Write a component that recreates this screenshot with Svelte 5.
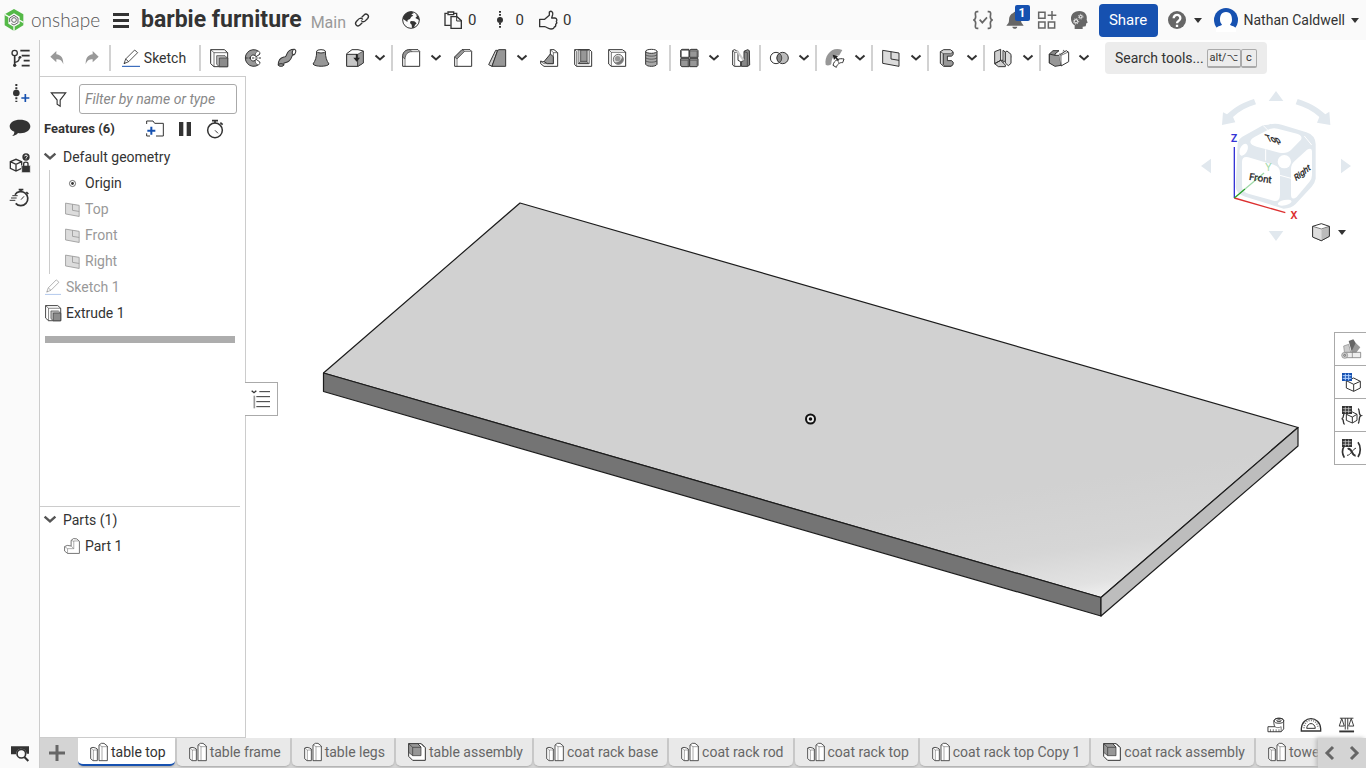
<script>
  // Icon artwork on a 54-unit grid, three units to the pixel at the default size.
  const G = '#979797';
  const L = '#cfcfcf';
  const part = '<path fill="#fff" stroke-width="2.5" d="M2 15l7-2 8 2 5 3v35H9l-7-6zM27 6l7-5h8l10 8v44H27z"/><path stroke="#555" stroke-width="1.5" d="M3 15l7 6h11M10 21v31M28 6l8 5h15M36 11v41"/>';
  const assembly = '<path fill="#fff" d="M2 2h38l12 12v38H14L2 40z"/><path fill="#979797" stroke-width="2" d="M2 2h27l10 10v26H14L2 28z"/><path stroke-width="2" d="M2 2l12 11h25M14 13v25M29 2l10 10M40 3l10 10"/>';
  const plane = '<path fill="#dcdcdc" d="M2 4l49 8v40L2 43z"/><path d="M27 8v22l24 4"/>';
  const pencil = '<path stroke-width="2.5" fill="#fff" d="M6 44l5-14L38 3l9 8-27 27zM11 30l9 8M6 44l4-3"/>';
  const extrude = `<path fill="#fff" d="M2 2h41l10 9v42H12L2 44z"/><path stroke-width="2" d="M2 2l10 9h41M12 11v42"/><path fill="#bdbdbd" stroke-width="2" d="M20 20h25l8 8v25H28l-8-7z"/><path fill="#8c8c8c" stroke-width="2" d="M28 27h25v26H28z"/>`;
  const gridDark = '<path fill="#333" stroke="none" d="M0 0h30v24H0z"/><path stroke="#ddd" stroke-width="2" d="M2 8h26M2 16h26M10 2v20M20 2v20"/>';

  const icons = {
    extrude,
    revolve: `<path fill="${G}" d="M44 7A25 25 0 1 0 44 47L48 40 36 31A9 9 0 1 1 36 23L48 15z"/><path fill="#fff" stroke-width="2" d="M34 21c-2-9 4-15 10-14 6 2 5 9-7 15zM34 33c-2 9 4 15 10 14 6-2 5-9-7-15z"/><path stroke-dasharray="7 3" d="M4 27h50"/>`,
    sweep: `<path stroke-width="20" d="M9 49C9 28 20 36 28 29 38 21 30 9 49 9"/><path stroke="${G}" stroke-width="14" d="M9 48C9 28 20 36 28 29 38 21 30 9 48 9"/><ellipse cx="9" cy="48" rx="8" ry="4" fill="${G}"/><ellipse cx="48" cy="9" rx="5" ry="8" fill="#fff" transform="rotate(15 48 9)"/>`,
    loft: `<path fill="${G}" d="M14 7C14 24 10 36 3 45c5 9 44 9 48 0-7-9-11-21-11-38z"/><ellipse cx="27" cy="7" rx="13" ry="5" fill="#fff"/>`,
    thicken: `<path fill="#fff" d="M2 14L18 2h18l16 4v36L36 52 2 50z"/><path fill="#c7c7c7" d="M2 16h33v36H2z"/><path fill="#999" stroke-width="2" d="M35 16L52 6v36L35 52z"/><path stroke-width="5" stroke="#222" d="M32 15v14"/><path fill="#222" stroke="none" d="M22 26h20L32 38z"/>`,
    fillet: `<path fill="#fff" d="M2 52V24C2 10 10 2 24 2h24l5 5v45z"/><path fill="${G}" stroke-width="2" d="M2 24C2 10 10 2 24 2l6 6C17 8 10 16 9 30z"/><path stroke-width="2" d="M30 8h22M9 30v22"/>`,
    chamfer: `<path fill="#fff" d="M2 52V24L24 2h24l5 5v45z"/><path fill="${G}" stroke-width="2" d="M2 24L24 2l8 5L9 30z"/><path stroke-width="2" d="M32 7h20M9 30v22"/>`,
    draft: `<path fill="#d0d0d0" d="M2 47L23 4h6L12 52z"/><path fill="${G}" d="M12 52L29 4l4-2h20v50z"/>`,
    rib: `<path fill="#fff" d="M2 36l6 2h23V2h11l11 9v41H12L2 44z"/><path stroke-width="2" d="M31 2l9 9h12M2 37l10 7h28V11"/><path fill="${G}" d="M12 38L31 15l9 8v21H22z"/>`,
    shell: `<path fill="#fff" d="M2 2h45l6 6v44H8l-6-5z"/><path fill="${G}" d="M13 3h32v41H13z"/><path fill="#c9c9c9" stroke-width="2" d="M13 3h7v34l-7 7M45 3l-6 1v34l6 6M20 37h19"/><path stroke-width="2" d="M2 2l6 6v44"/>`,
    hole: `<path fill="#fff" d="M2 2h41l10 7v43H10L2 45z"/><path stroke-width="2" d="M2 2l8 8h42M10 10v42"/><circle cx="31" cy="31" r="15" fill="#ddd" stroke-width="2"/><path fill="#777" stroke="none" d="M43 22A15 15 0 1 1 19 40c12 2 22-5 24-18z"/><circle cx="29" cy="29" r="8" fill="${G}" stroke="none"/>`,
    thread: `<path fill="#aaa" d="M11 7v39c4 8 30 8 34 0V7"/><path stroke-width="2" d="M11 17c4 6 30 6 34 0M11 26c4 6 30 6 34 0M11 35c4 6 30 6 34 0"/><ellipse cx="28" cy="7" rx="17" ry="6" fill="#fff"/>`,
    pattern: `<path fill="${G}" d="M2 4l4-3h21v24H2zM29 4l4-3h18l3 4v20H29zM2 29h25v24H6l-4-3zM29 29h25v20l-3 4H29z"/><path fill="#fff" stroke="none" d="M6 6h19v17H6z"/><path stroke="#555" stroke-width="2" d="M29 6h22v19M2 34h22v19M29 34h22v16"/>`,
    mirror: `<path fill="#fff" d="M2 5l5-3 11 5v27l8 4v14H7l-5-4z"/><path stroke-width="2" d="M2 5l6 5h9M8 10v41"/><path fill="#888" d="M52 5l-5-3-11 5v27l-8 4v14h19l6-4z"/><path stroke="#ccc" stroke-width="6" d="M14 4l21 30"/><path stroke-width="2" d="M36 8l10 3V52"/>`,
    boolean: `<circle cx="18" cy="27" r="17" fill="#fff"/><circle cx="38" cy="27" r="17" fill="#bbb"/><path fill="#888" stroke-width="2.5" d="M28 13a17 17 0 0 1 0 28 17 17 0 0 1 0-28z"/>`,
    modify: `<path fill="${G}" stroke="none" d="M-1 47C-6 18 19-10 49 3L39 20C28 14 17 24 16 44 14 49 4 51-1 47z"/><path fill="#fff" d="M21 49c2-9 6-14 13-17 7-4 14-3 20-2l-4 11c-6-1-9 1-13 4s-5 7-6 10z"/><path stroke-width="2" d="M34 32l5 11"/><path fill="#222" stroke="none" d="M20 17l17 4-5 4 7 8-3 3-8-8-4 5z"/>`,
    plane,
    frame: `<path fill="#d6d6d6" d="M7 8L17 2h20l8 6v9l-5 4H28v14h12l5 4v8l-6 5H17L7 43z"/><path fill="#999" stroke-width="2" d="M16 14h22l7-5v8l-5 4H28v14h12l5 4v7l-6 5H20l-4-4z"/><path stroke-width="2" d="M7 8l9 6v33"/>`,
    sheet: `<path fill="${L}" d="M2 8l18-7v33L2 44zM20 34l14 14v5H13L2 44zM20 34h18l14-10"/><path fill="#eee" d="M27 4l7 5v26l-7 5z"/><path fill="#ddd" d="M34 9l5-3 12 10v27l-8 7-9-8z"/>`,
    surface: `<path fill="#888" d="M-2 15L9 5h18L15 15v32l-17-5z"/><path fill="${G}" d="M-2 15l17 4h18v30l-18 3-17-10z"/><path fill="#fff" d="M29 17l20-12 7 5v28L33 51z"/><path fill="#ddd" stroke-width="2" d="M27 14l6 5v32M39 3l5 4-11 9"/><path stroke-width="2" d="M33 19L55 9"/>`,
    undo: '<path fill="#999" stroke="none" d="M7 23L25 6v10c14 2 21 10 21 30-4-11-10-15-21-15v9z"/>',
    redo: '<path fill="#999" stroke="none" d="M50 23L32 6v10C18 18 11 26 11 46c4-11 10-15 21-15v9z"/>',
    sketch: pencil + '<path stroke="#1651b0" d="M0 52h54"/>',
    sketchOff: `${pencil}<path stroke="#a9c2ea" d="M0 52h54"/>`,
    part,
    assembly,
    tree: '<g stroke-width="5"><circle cx="11" cy="12" r="8" stroke-width="4"/><path d="M11 20v28M28 5h28M32 20h24M38 35h18M32 50h24" /><circle cx="11" cy="49" r="5" fill="#333" stroke="none"/><path stroke-width="4" d="M11 40c10 0 14-4 14-15"/><circle cx="27" cy="25" r="4" fill="#333" stroke="none"/></g>',
    version: '<path stroke-width="6" stroke-dasharray="6 4" d="M16 0v54"/><circle cx="16" cy="27" r="10" fill="#333" stroke="none"/><path stroke="#1651b0" stroke-width="5" d="M43 30v24M31 42h24"/>',
    comment: '<path fill="#333" stroke="none" d="M27 2c18 0 31 8 31 20S45 43 29 43c-3 0-6 0-8-1-4 5-10 9-18 9 5-3 7-8 7-13C1 35-4 29-4 22-4 10 10 2 27 2z"/>',
    secure: '<path stroke-width="4" d="M-2 23l17-7 17 7v20l-17 8-17-8zM-2 23l17 8 17-8M15 31v20"/><circle cx="45" cy="9" r="11" fill="#333" stroke="none"/><path stroke="#fff" stroke-width="3" d="M41 7c0-5 8-5 8 0 0 3-4 3-4 6M45 14v2"/><path fill="#333" stroke="#fafafa" stroke-width="2" d="M32 34h26v22H32z"/><path stroke-width="4" d="M38 36v-7c0-6 13-6 13 0v7"/>',
    stopwatchFast: '<path stroke-width="5" d="M12 17a21 21 0 1 1 2 26M23 2h14M30 2v7M46 9l6 6"/><path stroke-width="3" d="M4 20h16M0 27h17M-4 34h17M30 32l9-10"/>',
    screenSearch: '<path fill="#333" stroke="none" d="M0 7h54v22H47c-2-20-31-20-32 2H0z"/><circle cx="31" cy="29" r="13" stroke-width="5"/><path stroke-width="6" d="M40 39l12 12"/>',
    link: '<g stroke-width="4.5" stroke-linecap="round"><path d="M29 24c-7-7-14 0-17 4L8 32c-8 9 4 20 12 12l7-7"/><path d="M25 30c7 7 14 0 17-4l4-4c8-9-4-20-12-12l-7 7"/></g>',
    globe: '<circle cx="27" cy="27" r="25"/><path fill="#333" stroke="none" d="M7 12C14 4 22 1 31 2l4 5-7 3 6 4-6 3-4 7-7 3-1 6-7-5-6-4C3 19 4 16 7 12zM26 30l11 1 7 6-5 5-3 8-6 1-1-10-5-5zM41 9l8 7 4 12-6-3-7-4 5-5z"/>',
    copy: '<path stroke-width="4" d="M20 43H3V7h8M29 7h9v8"/><path stroke-width="4" fill="#fafafa" d="M12 3h17v8H12zM21 17h18l13 12v23H21z"/><path stroke-width="3" d="M38 17v13h14"/>',
    dots: '<path stroke-width="6" stroke-dasharray="5 4" d="M27 0v54"/><circle cx="27" cy="27" r="9" fill="#333" stroke="none"/>',
    thumb: '<path stroke-width="4" stroke-linejoin="round" d="M2 25h15L31 13V3c6-5 12 0 10 8l-3 10h10c7 1 6 8 4 10 2 3 1 7-2 9 1 4-1 7-4 8-1 6-6 6-10 6-9 0-12-6-19-7H2z"/>',
    braces: '<g stroke="#666" stroke-width="5"><path d="M13 2H9C1 2 5 12 5 17c0 6-2 9-7 10 5 1 7 4 7 10 0 5-4 15 4 15h4M41 2h4c8 0 4 10 4 15 0 6 2 9 7 10-5 1-7 4-7 10 0 5 4 15-4 15h-4M17 26l8 9 14-16"/></g>',
    bell: '<path fill="#666" stroke="none" d="M22 6c2-5 8-5 9 0 10 3 14 12 14 22 0 8 4 10 8 16H1c5-6 8-8 8-16C9 17 13 9 22 6zM19 47h15c-1 8-14 8-15 0z"/>',
    apps: '<path stroke="#666" stroke-width="4.5" d="M2 4h19v18H2zM2 33h19v18H2zM31 33h19v18H31zM42 0v26M29 13h26"/>',
    head: '<path fill="#666" stroke="none" d="M3 25C2 8 14 0 28 0c17 0 25 13 22 26l3 9-4 2-2 9-9 1v7H14V43C7 39 4 33 3 25z"/><g stroke="#fff"><circle cx="18" cy="31" r="5" stroke-width="3"/><circle cx="18" cy="31" r="8" stroke-width="2.5" stroke-dasharray="3 3"/><circle cx="32" cy="17" r="4" stroke-width="3"/><circle cx="32" cy="17" r="7" stroke-width="2" stroke-dasharray="3 2.5"/></g>',
    help: '<circle cx="27" cy="27" r="27" fill="#666" stroke="none"/><path stroke="#fff" stroke-width="7" d="M17 22c0-14 21-13 20 0 0 8-10 7-10 15M27 41v7"/>',
    filter: '<path stroke-width="4" d="M1 3h52L33 29v22l-11-7V29z"/>',
    folder: '<path d="M2 12V3h19l5 7h26v38H30M2 40v8h10"/><path stroke="#1651b0" stroke-width="6" d="M16 20v24M4 32h24"/>',
    pause: '<path fill="#333" stroke="none" d="M9 6h13v42H9zM32 6h13v42H32z"/>',
    timer: '<circle cx="27" cy="31" r="22" stroke-width="4.5"/><path stroke-width="5" d="M18 2h18M27 2v8M43 8l7 6"/><path d="M27 31l9 9"/>',
    origin: '<circle cx="27" cy="27" r="11" stroke-width="2.5"/><circle cx="27" cy="27" r="5" fill="#333" stroke="none"/>',
    body: '<path stroke="#666" stroke-width="3" fill="#fff" d="M2 29l9-4 13 2V8l8-6 11 1 9 8v41H12L2 44z"/><path stroke="#777" stroke-width="2" d="M2 29l10 7v16M12 36h21V10h18M24 27l9 9M24 8l9 3"/>',
    list: '<path d="M-1 2l7 6 7-6" stroke-width="4"/><path stroke="#999" stroke-width="5" d="M7 17v38"/><path d="M22 5h32M13 20h41M13 35h41M13 50h41"/>',
    appearance: '<path fill="#666" stroke="none" d="M20 3l14-5 9 14-13 26z"/><path fill="#999" stroke="none" d="M41 9l14 13-13 17-16 1z"/><path fill="#ccc" stroke="#888" stroke-width="2" d="M5 18l15-5 9 34-20 4z"/><path fill="#eee" stroke="#666" stroke-width="2" d="M10 37h46v16H10z"/><circle cx="8" cy="46" r="9" fill="#ccc" stroke="#888" stroke-width="2"/><circle cx="8" cy="46" r="3" stroke="#555" stroke-width="2"/><path stroke="#777" stroke-width="2" d="M31 37v16"/>',
    tableCube: '<path fill="#fff" d="M13 23l22-8 20 10v20L35 55 13 45zM13 23l22 11 20-9M35 34v21"/><path fill="#1651b0" stroke="none" d="M0 0h30v24H0z"/><path stroke="#b5d4ff" stroke-width="3" d="M2 8h26M2 16h26M10 2v20M20 2v20"/>',
    tableBraces: '<path fill="#fff" d="M13 25l18-7 14 7v18l-14 8-18-8zM13 25l18 8 14-8M31 33v18"/><path d="M7 24c-6 2 1 12-8 14 9 2 2 16 9 17M48 8c7 2 0 18 9 21-9 3-2 20-9 23" stroke-width="4"/>' + gridDark,
    tableVar: '<path stroke-width="5" d="M6 22c-6 10-6 22 1 34M48 10c9 12 9 30 0 44"/><path stroke-width="6" d="M17 30c13-6 11 20 24 20"/><path stroke-width="3" d="M42 28c-7-2-16 22-27 21"/>' + gridDark,
    tape: '<path fill="#fff" d="M3 34h22c-3-6-4-12-3-20 5-9 27-9 31 0v27l-8 9H3z"/><ellipse cx="38" cy="15" rx="15" ry="8"/><ellipse cx="38" cy="15" rx="7" ry="3"/><path d="M25 34c5 4 14 4 20 0v16M11 42v8M20 42v8M29 42v8M38 42v8" stroke-width="2"/>',
    protractor: '<path fill="#fff" d="M-2 48v-7C0 1 54 1 56 41v7z" stroke-width="4"/><path d="M14 40c2-19 24-19 26 0z"/><path stroke-width="5" stroke="#777" stroke-dasharray="3 4" d="M6 40C7 8 47 8 48 40"/>',
    scale: '<path stroke-width="3" d="M6 7h43M23 7v36M31 7v36M12 8L4 32h16zM42 8l-8 24h16z"/><path stroke-width="6" d="M4 49h47"/>',
    cube: '<path fill="#fff" d="M2 10l26-8 24 8v30L28 53 2 42z"/><path fill="#ddd" stroke="none" d="M3 11l25 9v32L3 41z"/><path fill="#bbb" stroke="none" d="M28 20l23-9v28L28 52z"/><path stroke-width="2" d="M2 10l26 8 24-8v30L28 53 2 42z"/>'
  };

  const toolGroups = [
    ['extrude', 'revolve', 'sweep', 'loft', 'thicken', '>'],
    ['fillet', '>', 'chamfer', 'draft', '>', 'rib', 'shell', 'hole', 'thread'],
    ['pattern', '>', 'mirror'],
    ['boolean', '>'],
    ['modify', '>'],
    ['plane', '>'],
    ['frame', '>'],
    ['sheet', '>'],
    ['surface', '>']
  ];

  const rail = ['tree', 'version', 'comment', 'secure', 'stopwatchFast'];
  const geometry = [
    { name: 'Origin', icon: 'origin' },
    { name: 'Top', icon: 'plane', dim: true },
    { name: 'Front', icon: 'plane', dim: true },
    { name: 'Right', icon: 'plane', dim: true }
  ];
  const tabs = [
    ['table top', 'part'], ['table frame', 'part'], ['table legs', 'part'], ['table assembly', 'assembly'],
    ['coat rack base', 'part'], ['coat rack rod', 'part'], ['coat rack top', 'part'],
    ['coat rack top Copy 1', 'part'], ['coat rack assembly', 'assembly'], ['towe', 'part']
  ];
  let active = $state(0);
  let filter = $state('');
</script>

{#snippet icon(name, size = 18)}
  <svg class="icon" width={size} height={size} viewBox="0 0 54 54" aria-hidden="true">{@html icons[name]}</svg>
{/snippet}

{#snippet chevron(w = 10)}
  <svg class="icon" width={w} height={w * 0.6} viewBox="0 0 10 6" aria-hidden="true"><path stroke-width="2" d="M.5.5L5 4.5 9.5.5" /></svg>
{/snippet}

{#snippet caret()}
  <svg width="8" height="5" viewBox="0 0 8 5" aria-hidden="true"><path fill="#333" d="M0 0h8L4 5z" /></svg>
{/snippet}

<div class="app">
  <header>
    <a class="brand" href="#home">
      <svg width="20" height="22" viewBox="0 0 60 66" aria-hidden="true">
        <path fill="#55b948" fill-rule="evenodd" d="M30 0l28 16v33L30 66 2 49V16zM30 13L13 23v21l17 10 17-10V23z" />
        <path fill="none" stroke="#fafafa" stroke-width="4" d="M2 16l14 8M58 40L45 33M30 66V53" />
        <path fill="none" stroke="#666" stroke-width="3" d="M17 39V27l13-8 12 8v14l-12 7-8-4" />
        <circle cx="30" cy="33" r="7" fill="none" stroke="#666" stroke-width="3" />
      </svg>
      <span>onshape</span>
    </a>
    <button class="menu" aria-label="Menu"><i></i><i></i><i></i></button>
    <h1>barbie furniture</h1>
    <span class="branch">Main</span>
    <button aria-label="Copy link">{@render icon('link', 16)}</button>
    <button class="globe" aria-label="Public document">{@render icon('globe')}</button>
    <button class="count">{@render icon('copy')}<span>0</span></button>
    <button class="count">{@render icon('dots')}<span>0</span></button>
    <button class="count">{@render icon('thumb')}<span>0</span></button>
    <div class="account">
      <button aria-label="Custom features">{@render icon('braces')}</button>
      <button class="bell" aria-label="Notifications">{@render icon('bell')}<b>1</b></button>
      <button aria-label="App store">{@render icon('apps')}</button>
      <button aria-label="Learning center">{@render icon('head')}</button>
      <button class="share">Share</button>
      <button class="help" aria-label="Help">{@render icon('help')}{@render caret()}</button>
      <button class="user">
        <svg width="24" height="24" viewBox="0 0 24 24" aria-hidden="true">
          <circle cx="12" cy="12" r="12" fill="#1651b0" />
          <path fill="#fff" d="M12 4c5 0 6 4 6 8 0 3-2 4-2 5 2 1 5 1 6 4v3H2v-3c1-3 4-3 6-4 0-1-2-2-2-5 0-4 1-8 6-8z" />
        </svg>
        <span>Nathan Caldwell</span>{@render caret()}
      </button>
    </div>
  </header>

  <div class="body">
    <nav class="rail">
      {#each rail as name}
        <button aria-label={name}>{@render icon(name)}</button>
      {/each}
      <button class="last" aria-label="Search tabs">{@render icon('screenSearch')}</button>
    </nav>

    <div class="work">
      <div class="toolbar">
        <button class="tool" aria-label="Undo">{@render icon('undo')}</button>
        <button class="tool" aria-label="Redo">{@render icon('redo')}</button>
        <i class="sep"></i>
        <button class="sketch">{@render icon('sketch')}Sketch</button>
        {#each toolGroups as group}
          <i class="sep"></i>
          {#each group as t}
            {#if t === '>'}
              <button class="drop" aria-label="More">{@render chevron()}</button>
            {:else}
              <button class="tool" aria-label={t}>{@render icon(t)}</button>
            {/if}
          {/each}
        {/each}
        <button class="search">Search tools... <kbd>alt/<span>⌥</span></kbd><kbd>c</kbd></button>
      </div>

      <div class="main">
        <aside>
          <div class="features">
            <div class="filter">
              {@render icon('filter', 15)}
              <input type="text" placeholder="Filter by name or type" aria-label="Filter features" bind:value={filter} />
            </div>
            <div class="heading">
              <h2>Features (6)</h2>
              <button aria-label="New folder">{@render icon('folder')}</button>
              <button aria-label="Pause">{@render icon('pause')}</button>
              <button aria-label="Timing">{@render icon('timer')}</button>
            </div>
            <button class="row toggle">{@render chevron(12)}<span>Default geometry</span></button>
            <ul class="nested">
              {#each geometry as g}
                <li class="row" class:dim={g.dim}>{@render icon(g.icon, 15)}<span>{g.name}</span></li>
              {/each}
            </ul>
            <div class="row dim">{@render icon('sketchOff', 16)}<span>Sketch 1</span></div>
            <div class="row">{@render icon('extrude', 16)}<span>Extrude 1</span></div>
            <div class="rollback"></div>
          </div>
          <div class="parts">
            <button class="row toggle">{@render chevron(12)}<span>Parts (1)</span></button>
            <div class="row part">{@render icon('body', 16)}<span>Part 1</span></div>
          </div>
        </aside>

        <main>
          <svg class="model" viewBox="246 76 1120 662" role="img" aria-label="Part 1">
            <defs>
              <linearGradient id="sheen" gradientUnits="userSpaceOnUse" x1="1080" y1="480" x2="1098" y2="600">
                <stop offset="0" stop-color="#d1d1d1" />
                <stop offset=".55" stop-color="#d6d6d6" />
                <stop offset=".85" stop-color="#e2e2e2" />
                <stop offset="1" stop-color="#f2f2f2" />
              </linearGradient>
            </defs>
            <g stroke="#1c1c1c" stroke-width="1.2" stroke-linejoin="round">
              <path fill="url(#sheen)" d="M520 203L1298 427.500 1101 597.500 323.500 373z" />
              <path fill="#747474" d="M323.500 373L1101 597.500V616L323.500 391.500z" />
              <path fill="#bdbdbd" d="M1298 427.500V446L1101 616V597.500z" />
            </g>
            <circle cx="810.500" cy="419" r="4.500" fill="#eee" stroke="#111" stroke-width="2" />
            <circle cx="810.500" cy="419" r="1.800" fill="#111" />
          </svg>

          <button class="handle" aria-label="Toggle panel">{@render icon('list')}</button>

          <div class="view">
            <svg width="176" height="170" viewBox="0 0 528 510" aria-label="View cube">
              <g fill="#e1e8ee">
                <path d="M258 33l22 30h-44zM258 483l22-30h-44zM33 258l30-22v44zM483 258l-30-22v44z" />
                <path d="M192 57l6 16c-27 8-49 20-69 38l7 16-40 8 3-38 12 6c24-22 50-37 81-46zM323 57l-6 16c27 8 51 20 71 38l-7 17 40 7-3-40-12 8c-24-22-52-37-83-46z" />
                <path d="M143 190q2-12 14-20l62-34 16-2q20-6 40 0l74 23q27 9 28 35v104q-2 12-12 24l-48 52q-14 14-36 14l-115-36q-28-9-29-30z" />
              </g>
              <g fill="#fff">
                <path d="M181 186q0-9 14-16l38-20q12-7 30-4l58 15q18 5 12 18l-30 31q-12 12-35 8l-68-18q-18-5-19-14z" />
                <path d="M156 246q0-18 19-14l76 22q19 6 19 24v66q-1 23-20 18l-75-21q-19-6-19-23z" />
                <path d="M303 268q0-16 11-25l37-34q16-8 15 8v68q0 12-8 21l-38 45q-16 12-17-6z" />
                <circle cx="283" cy="245" r="20" /><ellipse cx="161" cy="209" rx="11" ry="19" transform="rotate(25 161 209)" />
                <ellipse cx="284" cy="368" rx="21" ry="8" transform="rotate(-12 284 368)" />
              </g>
              <path fill="none" stroke="#fff" stroke-width="3" d="M227 208v34M270 286l33 9M343 168l22 27M219 136l14 14" />
              <g fill="none" stroke-width="4">
                <path stroke="#3535d6" d="M133 201v153" />
                <path stroke="#dc3030" d="M133 354l153 44" />
                <path stroke="#28a028" d="M133 354l32-27" />
                <path stroke="#9fd9a8" d="M165 327l57-48" />
              </g>
              <g class="axis">
                <text x="122" y="186" fill="#3535d6">Z</text>
                <text x="301" y="417" fill="#dc3030">X</text>
                <text x="225" y="274" fill="#9fd9a8" class="thin">Y</text>
              </g>
              <g class="face">
                <text class="front" transform="translate(176 299) rotate(9)">Front</text>
                <text transform="translate(317 304) rotate(-38) skewX(-18)">Right</text>
                <text transform="translate(233 183) rotate(10) skewX(38)">Top</text>
              </g>
            </svg>
            <button class="shade" aria-label="Display mode">{@render icon('cube')}{@render caret()}</button>
          </div>

          <div class="panels">
            <button aria-label="Appearances">{@render icon('appearance')}</button>
            <button aria-label="Configurations">{@render icon('tableCube')}</button>
            <button aria-label="Custom tables">{@render icon('tableBraces')}</button>
            <button aria-label="Variables">{@render icon('tableVar')}</button>
          </div>

          <div class="measure">
            <button aria-label="Measure">{@render icon('tape', 17)}</button>
            <button aria-label="Angle">{@render icon('protractor')}</button>
            <button aria-label="Mass properties">{@render icon('scale', 17)}</button>
          </div>
        </main>
      </div>

      <footer>
        <button class="add" aria-label="New tab"><svg width="16" height="16" viewBox="0 0 16 16"><path stroke="#666" stroke-width="3" d="M8 0v16M0 8h16" /></svg></button>
        <div class="tabs">
          {#each tabs as [name, kind], i}
            <button class="tab" class:active={i === active} onclick={() => (active = i)}>{@render icon(kind)}{name}</button>
          {/each}
        </div>
        <div class="scroll">
          <button aria-label="Previous tabs"><svg width="10" height="14" viewBox="0 0 10 14"><path fill="none" stroke="#666" stroke-width="3" d="M8 1L2 7l6 6" /></svg></button>
          <button aria-label="Next tabs"><svg width="10" height="14" viewBox="0 0 10 14"><path fill="none" stroke="#666" stroke-width="3" d="M2 1l6 6-6 6" /></svg></button>
        </div>
      </footer>
    </div>
  </div>
</div>

<style>
  :global(body) { margin: 0; }
  .app {
    display: flex; flex-direction: column; height: 100vh; overflow: hidden;
    background: #fff; color: #333; font: 14px/20px Roboto, "Liberation Sans", sans-serif;
  }
  button {
    display: flex; align-items: center; justify-content: center; flex: none;
    margin: 0; padding: 0; border: 0; background: none; color: inherit; font: inherit; cursor: pointer;
  }
  svg { display: block; flex: none; overflow: visible; }
  .icon { fill: none; stroke: #333; stroke-width: 3; }
  h1, h2, ul { margin: 0; padding: 0; list-style: none; }

  header { display: flex; align-items: center; flex: none; height: 40px; padding: 0 7px 0 4px; background: #fafafa; }
  .brand { display: flex; align-items: center; gap: 7px; width: 109px; color: #555; font: 300 19px/20px Lato, sans-serif; text-decoration: none; }
  .menu { display: flex; flex-direction: column; gap: 3px; width: 16px; margin-right: 12px; }
  .menu i { width: 16px; height: 3px; background: #333; }
  h1 { font-size: 23px; line-height: 28px; font-weight: 700; white-space: nowrap; }
  .branch { margin: 6px 8px 0 9px; color: #999; font-size: 16px; }
  .globe { margin: 0 24px 0 32px; }
  .count { gap: 6px; margin-right: 15px; font-size: 15px; }
  .account { display: flex; align-items: center; gap: 14px; margin-left: auto; }
  .bell { position: relative; }
  .bell b {
    position: absolute; left: 9px; top: -6px; width: 15px; height: 16px; border-radius: 2px;
    background: #1651b0; color: #fff; font-size: 12px; line-height: 16px;
  }
  .share { width: 59px; height: 33px; margin-left: -3px; border-radius: 4px; background: #1651b0; color: #fff; font-size: 15px; }
  .help { gap: 8px; margin: 0 -2px 0 -4px; }
  .user { gap: 6px; }

  .body { display: flex; flex: 1; min-height: 0; }
  .rail { display: flex; flex-direction: column; flex: none; width: 39px; border-right: 1px solid #ccc; background: #fafafa; }
  .rail button { width: 40px; height: 35px; }
  .rail .last { margin-top: auto; height: 30px; }
  .work { display: flex; flex-direction: column; flex: 1; min-width: 0; }

  .toolbar { display: flex; align-items: center; flex: none; height: 36px; }
  .tool { width: 34px; height: 34px; }
  .drop { width: 18px; height: 34px; padding-right: 2px; }
  .sep { flex: none; width: 2px; height: 26px; margin: 0 1px; background: #d2d2d2; }
  .sketch { gap: 4px; width: 86px; height: 34px; padding-right: 2px; }
  .search { margin-left: 11px; padding: 0 10px; height: 32px; border-radius: 4px; background: #ececec; }
  kbd {
    height: 16px; padding: 0 2px; border: 1px solid #aaa; border-bottom-width: 2px; border-radius: 2px;
    font: 11px/16px Roboto, sans-serif;
  }
  kbd:first-of-type { margin-left: 3px; }
  kbd:last-of-type { padding: 0 4px; }
  kbd span { font-family: "DejaVu Sans", sans-serif; font-size: 10px; }

  .main { display: flex; flex: 1; min-height: 0; }
  aside { display: flex; flex-direction: column; flex: none; width: 205px; border: solid #ccc; border-width: 1px 1px 1px 0; }
  .features { flex: 1; min-height: 0; }
  .filter { display: flex; align-items: center; gap: 13px; padding: 7px 8px 0 11px; }
  .filter input {
    flex: 1; min-width: 0; height: 30px; box-sizing: border-box; padding: 0 5px; border: 1px solid #aaa; border-radius: 3px;
    background: #fff; color: #333; font: 14px/20px Roboto, sans-serif;
  }
  .filter input::placeholder { color: #888; font-style: italic; opacity: 1; }
  .heading { display: flex; align-items: center; gap: 12px; height: 30px; padding: 0 21px 0 4px; }
  h2 { flex: 1; font-size: 13px; line-height: 20px; font-weight: 700; }
  .row { display: flex; align-items: center; justify-content: flex-start; gap: 5px; height: 26px; width: 100%; box-sizing: border-box; padding-left: 5px; }
  .toggle { gap: 7px; padding-left: 4px; }
  .toggle .icon { stroke: #555; }
  .nested { margin-left: 9px; border-left: 1px solid #ccc; }
  .nested .row { padding-left: 15px; }
  .dim { color: #999; }
  .dim .icon { stroke: #999; }
  .rollback { height: 7px; margin: 10px 10px 0 5px; background: #adadad; }
  .parts { height: 231px; }
  .parts::before { content: ""; display: block; height: 1px; margin-right: 5px; background: #ccc; }
  .part { padding-left: 24px; }

  main { position: relative; flex: 1; min-width: 0; }
  .model { width: 100%; height: 100%; }
  .handle {
    position: absolute; left: -1px; top: 306px; width: 33px; height: 34px; box-sizing: border-box;
    border: 1px solid #aaa; border-left: 0; background: #fff;
  }
  .view { position: absolute; right: 0; top: 4px; }
  .face { fill: #222; stroke: #222; stroke-width: 1; font: 24px Inter, sans-serif; }
  .front { font-size: 28px; }
  .axis { font: 700 30px Inter, sans-serif; }
  .thin { font-weight: 400; }
  .shade { position: absolute; left: 122px; top: 143px; gap: 8px; }
  .panels { position: absolute; right: 0; top: 256px; border: solid #aaa; border-width: 1px 0 0 1px; background: #fff; }
  .panels button { width: 31px; height: 33px; box-sizing: border-box; border-bottom: 1px solid #aaa; }
  .measure { position: absolute; right: 11px; bottom: 5px; display: flex; align-items: center; gap: 18px; }

  footer { display: flex; flex: none; height: 30px; background: #d4d4d4; }
  .add { width: 34px; margin-right: 4px; }
  .tabs { display: flex; gap: 2px; flex: 1; min-width: 0; overflow: hidden; }
  .tab {
    gap: 3px; height: 28px; padding: 1px 9px 0 12px; border-radius: 0 0 5px 5px; background: #e9e9e9; color: #666;
    box-shadow: 0 1px 2px #aaa; white-space: nowrap; border-bottom: 1px solid #e9e9e9;
  }
  .tab.active { border-bottom: 2px solid #1651b0; background: #fff; color: #333; }
  .scroll { display: flex; flex: none; width: 48px; box-shadow: -2px 0 4px #bbb; }
  .scroll button { flex: 1; }
</style>
